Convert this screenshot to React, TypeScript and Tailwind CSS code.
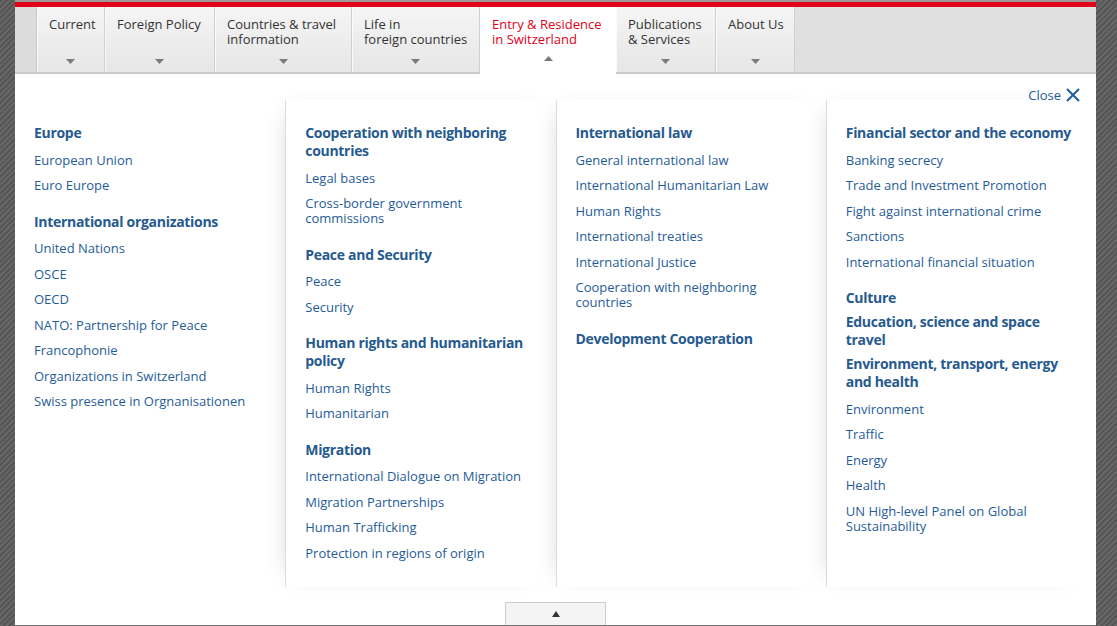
import React from "react";

type Section = { title: string; links: string[] };

const TABS = [
  { label: ["Current"], w: "w-[68px]" },
  { label: ["Foreign Policy"], w: "w-[110px]" },
  { label: ["Countries & travel", "information"], w: "w-[137px]" },
  { label: ["Life in", "foreign countries"], w: "w-[128px]" },
  { label: ["Entry & Residence", "in Switzerland"], w: "w-[136px]", active: true },
  { label: ["Publications", "& Services"], w: "w-[100px]" },
  { label: ["About Us"], w: "w-[79px]" },
];

const COLUMNS: Section[][] = [
  [
    { title: "Europe", links: ["European Union", "Euro Europe"] },
    {
      title: "International organizations",
      links: [
        "United Nations",
        "OSCE",
        "OECD",
        "NATO: Partnership for Peace",
        "Francophonie",
        "Organizations in Switzerland",
        "Swiss presence in Orgnanisationen",
      ],
    },
  ],
  [
    {
      title: "Cooperation with neighboring countries",
      links: ["Legal bases", "Cross-border government commissions"],
    },
    { title: "Peace and Security", links: ["Peace", "Security"] },
    {
      title: "Human rights and humanitarian policy",
      links: ["Human Rights", "Humanitarian"],
    },
    {
      title: "Migration",
      links: [
        "International Dialogue on Migration",
        "Migration Partnerships",
        "Human Trafficking",
        "Protection in regions of origin",
      ],
    },
  ],
  [
    {
      title: "International law",
      links: [
        "General international law",
        "International Humanitarian Law",
        "Human Rights",
        "International treaties",
        "International Justice",
        "Cooperation with neighboring countries",
      ],
    },
    { title: "Development Cooperation", links: [] },
  ],
  [
    {
      title: "Financial sector and the economy",
      links: [
        "Banking secrecy",
        "Trade and Investment Promotion",
        "Fight against international crime",
        "Sanctions",
        "International financial situation",
      ],
    },
    { title: "Culture", links: [] },
    { title: "Education, science and space travel", links: [] },
    {
      title: "Environment, transport, energy and health",
      links: [
        "Environment",
        "Traffic",
        "Energy",
        "Health",
        "UN High-level Panel on Global Sustainability",
      ],
    },
  ],
];

function Arrow({ up }: { up?: boolean }) {
  return (
    <svg width="9" height="5" viewBox="0 0 9 5" className="mx-auto">
      <path d={up ? "M0 5 L4.5 0 L9 5 Z" : "M0 0 L9 0 L4.5 5 Z"} fill="#7a7a7a" />
    </svg>
  );
}

function Column({ sections, first }: { sections: Section[]; first?: boolean }) {
  return (
    <div
      className={
        "pt-[24px] pl-[19px] pr-[14px] flex flex-col gap-[6px] " +
        (first
          ? ""
          : "border-l border-[#dcdcdc] shadow-[-10px_0_22px_-14px_rgba(0,0,0,0.18)]")
      }
    >
      {sections.map((s) => (
        <div key={s.title} className={s.links.length ? "pb-[13.5px]" : ""}>
          <h3 className="text-[14px] leading-[18px] font-bold tracking-[-0.3px] text-[#265a8f]">
            {s.title}
          </h3>
          <ul>
            {s.links.map((l) => (
              <li key={l} className="mt-[10.5px] text-[13px] leading-[15px] text-[#1f5c99]">
                {l}
              </li>
            ))}
          </ul>
        </div>
      ))}
    </div>
  );
}

export default function App() {
  return (
    <div
      className="w-[1117px] h-[626px] overflow-hidden pl-[15px] pr-[21px] bg-[repeating-linear-gradient(135deg,#565656_0px,#565656_2px,#666_2px,#666_4px)]"
      style={{ fontFamily: '"Open Sans", "Noto Sans", sans-serif' }}
    >
      <div className="h-full flex flex-col">
        <div className="h-[2px] bg-[#9a9a9a]" />
        <div className="h-[5px] bg-[#e2001a]" />

        <nav className="h-[67px] flex bg-[#e0e0e0] border-b-2 border-[#cacaca]">
          <div className="w-[22px] bg-[#dcdcdc] border-r border-[#c9c9c9]" />
          {TABS.map((t) => (
            <div
              key={t.label[0]}
              className={
                t.w +
                " flex flex-col px-3 pt-[10px] pb-[8px] text-[13px] leading-[15px] " +
                (t.active
                  ? "bg-white text-[#e2001a] -mb-[2px] pb-[13px]"
                  : "bg-[linear-gradient(#f5f5f5,#e6e6e6)] text-[#333] border-r border-[#cfcfcf] shadow-[inset_1px_0_0_#fafafa]")
              }
            >
              <p className="whitespace-nowrap">
                {t.label.map((line, i) => (
                  <React.Fragment key={line}>
                    {i > 0 && <br />}
                    {line}
                  </React.Fragment>
                ))}
              </p>
              <div className="mt-auto">
                <Arrow up={t.active} />
              </div>
            </div>
          ))}
          <div className="flex-1" />
        </nav>

        <div className="flex-1 bg-white flex flex-col">
          <div className="h-[26px] flex justify-end items-start pt-[13px] pr-[16px]">
            <span className="flex items-center gap-[5px] text-[13px] leading-[16px] text-[#1f5c99]">
              Close
              <svg width="14" height="14" viewBox="0 0 14 14">
                <path d="M1 1 L13 13 M13 1 L1 13" stroke="#1f5c99" strokeWidth="2" />
              </svg>
            </span>
          </div>

          <div className="h-[487px] grid grid-cols-4">
            {COLUMNS.map((c, i) => (
              <Column key={i} sections={c} first={i === 0} />
            ))}
          </div>

          <div className="flex-1 flex justify-center items-end">
            <div className="w-[101px] h-[23px] bg-[#f4f4f4] border border-b-0 border-[#cccccc] flex items-center justify-center">
              <svg width="8" height="6" viewBox="0 0 8 6">
                <path d="M0 6 L4 0 L8 6 Z" fill="#333" />
              </svg>
            </div>
          </div>
        </div>
        <div className="h-[1px] bg-[#777]" />
      </div>
    </div>
  );
}
